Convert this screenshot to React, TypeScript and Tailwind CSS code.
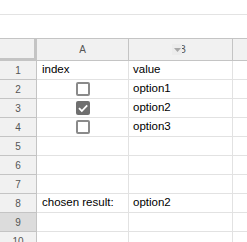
import React from "react";

function Box({ checked }: { checked?: boolean }) {
  if (checked) {
    return (
      <div className="w-[14px] h-[14px] rounded-[2px] bg-[#6f6f6f] flex items-center justify-center">
        <svg width="12" height="12" viewBox="0 0 12 12">
          <path d="M2 6.2 L4.8 9 L10.2 3.4" fill="none" stroke="#ffffff" strokeWidth="1.8" />
        </svg>
      </div>
    );
  }
  return <div className="w-[14px] h-[14px] rounded-[2px] border-2 border-[#8a8a8a] bg-white" />;
}

export default function App() {
  const rows: { a: React.ReactNode; b: string; center?: boolean }[] = [
    { a: "index", b: "value" },
    { a: <Box />, b: "option1", center: true },
    { a: <Box checked />, b: "option2", center: true },
    { a: <Box />, b: "option3", center: true },
    { a: "", b: "" },
    { a: "", b: "" },
    { a: "", b: "" },
    { a: "chosen result:", b: "option2" },
    { a: "", b: "" },
    { a: "", b: "" },
  ];
  return (
    <div
      className="w-[247px] h-[242px] overflow-hidden bg-white text-black"
      style={{ fontFamily: '"Liberation Sans", Arial, sans-serif' }}
    >
      <div className="h-[14px]" />
      <div className="h-px bg-[#e3e3e3]" />
      <div className="h-[23px]" />
      <div className="grid grid-cols-[37px_92px_104px_1fr] border-t border-[#c4c4c4]">
        <div className="h-[22px] bg-[#f1f1f1] border-r-[3px] border-b-[3px] border-[#c4c4c4]" />
        <div className="h-[22px] bg-[#f1f1f1] border-r border-b border-[#c4c4c4] flex items-center justify-center text-[10px] text-[#555]">
          A
        </div>
        <div className="relative h-[22px] bg-[#f1f1f1] border-r border-b border-[#c4c4c4] flex items-center justify-center text-[10px] text-[#555]">
          <span className="ml-[4px]">B</span>
          <div className="absolute left-[43px] top-[5px] w-[10px] h-[11px] bg-[#ececec] flex items-center justify-center">
            <svg width="7" height="4" viewBox="0 0 7 4">
              <path d="M0 0 L7 0 L3.5 4 Z" fill="#a8a8a8" />
            </svg>
          </div>
        </div>
        <div className="h-[22px] bg-[#f1f1f1] border-b border-[#c4c4c4]" />
        {rows.map((r, i) => (
          <React.Fragment key={i}>
            <div
              className={`h-[19px] border-r border-b border-[#c4c4c4] flex items-center justify-center text-[10px] text-[#555] ${
                i === 8 ? "bg-[#dcdcdc]" : "bg-[#f1f1f1]"
              }`}
            >
              {i + 1}
            </div>
            <div
              className={`h-[19px] border-r border-b border-[#e2e2e2] flex items-center text-[11.5px] ${
                r.center ? "justify-center" : "pl-[5px]"
              }`}
            >
              {r.a}
            </div>
            <div className="h-[19px] border-r border-b border-[#e2e2e2] flex items-center pl-[4px] text-[11.5px]">
              {r.b}
            </div>
            <div className="h-[19px] border-b border-[#e2e2e2]" />
          </React.Fragment>
        ))}
      </div>
    </div>
  );
}
